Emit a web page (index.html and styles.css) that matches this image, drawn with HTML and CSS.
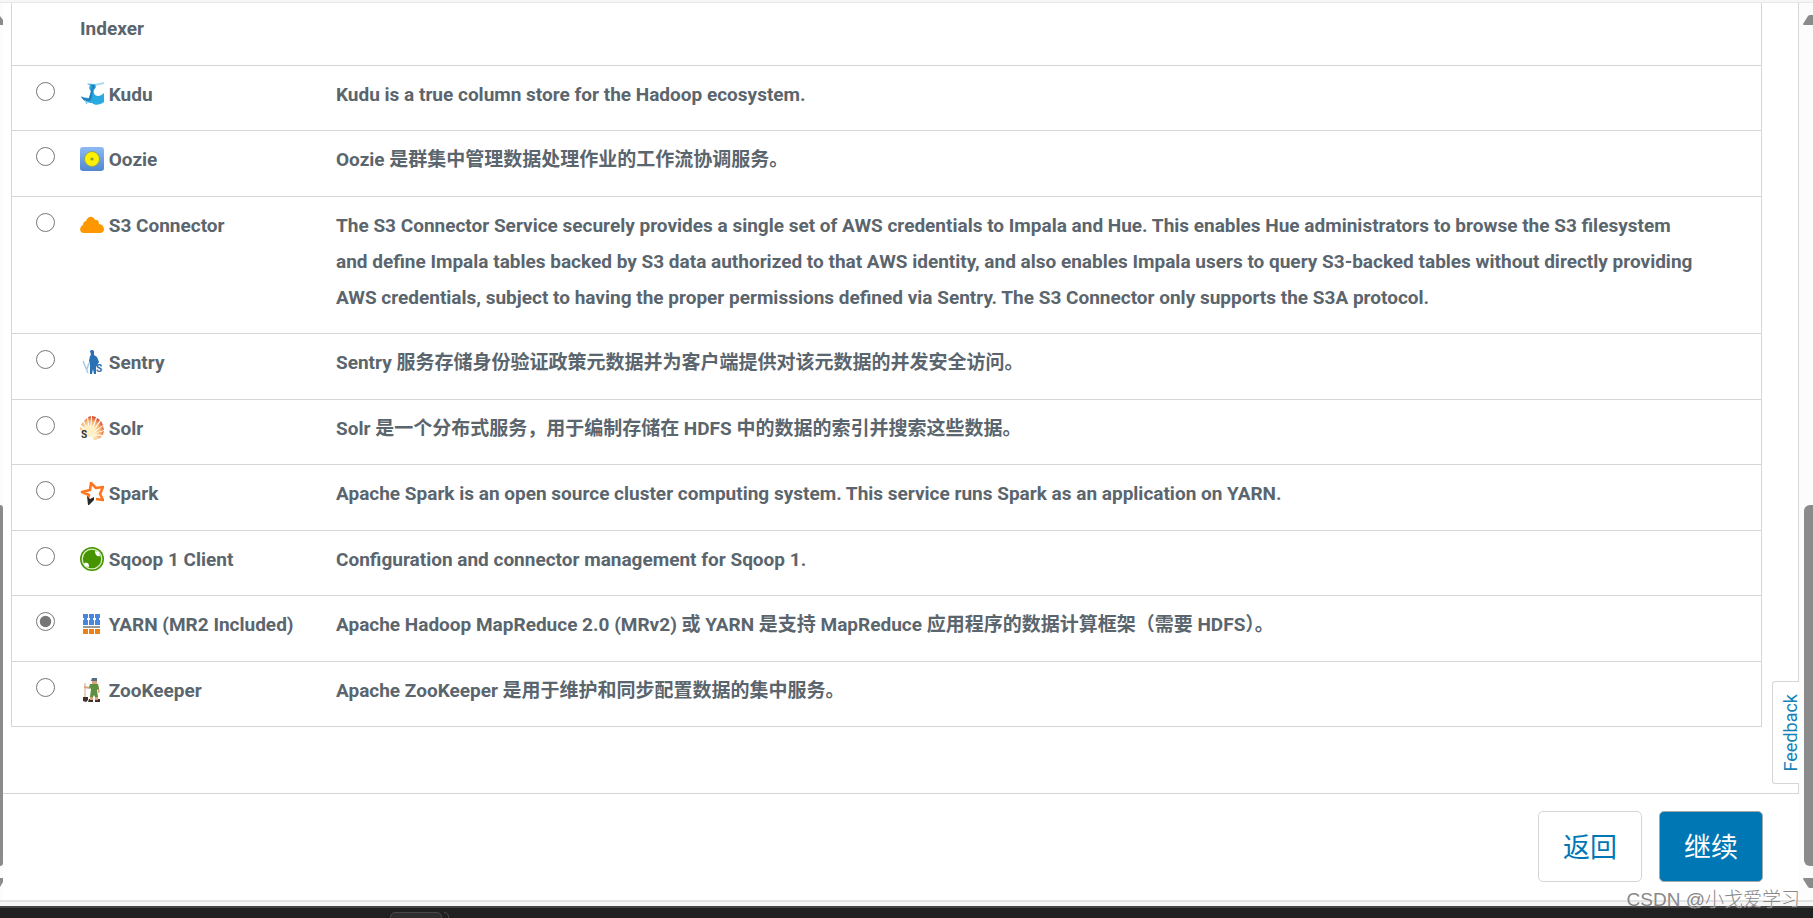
FILE: index.html
```html
<!DOCTYPE html>
<html lang="zh-CN">
<head>
    <meta charset="UTF-8">
    <meta name="viewport" content="width=device-width, initial-scale=1.0">
    <title>添加服务</title>
    <link rel="stylesheet" href="styles.css">
</head>
<body>
    <div class="top-edge"></div>

    <div class="window">
        <div class="scrollbar scrollbar-left">
            <svg class="arrow" viewBox="0 0 3 10"><path d="M0 1L3 5V10H0z"/></svg>
            <div class="thumb"></div>
            <svg class="arrow" viewBox="0 0 3 10"><path d="M0 0H3V4L0 9z"/></svg>
        </div>

        <main class="panel">
            <div class="service-list">
                <table>
                    <tbody>
                        <tr>
                            <td class="pick"></td>
                            <td class="name"><label><svg class="icon" viewBox="0 0 24 24"><path fill="#8d8a80" d="M3 20h7v3H3zM13 20h8v3h-8z"/></svg> Key-Value Store Indexer</label></td>
                            <td class="desc"></td>
                        </tr>
                        <tr>
                            <td class="pick"><input type="radio" name="service" id="kudu"></td>
                            <td class="name"><label for="kudu"><svg class="icon" viewBox="0 0 24 24"><path fill="#a9dcf3" d="M7 1l8 1 9-2v2l-9 2-7-1z"/><path fill="#29abe2" d="M10 3l5-1 1 3-2 3c-1 3 1 6 4 6 2 0 4-1 6-3v9c-4 3-9 4-12 1-4 0-8-2-11-6l8 1 2-6-2-4z"/><path fill="#2380bd" d="M8 2l4 2-1 5-2 7c-1 2-5 0-8-2 2 5 6 6 9 5 3-3 2-7 3-11l2-3-1-2z"/><path stroke="#75bde2" d="M5 18l2 4M8 19l-2 3"/></svg> Kudu</label></td>
                            <td class="desc">Kudu is a true column store for the Hadoop ecosystem.</td>
                        </tr>
                        <tr>
                            <td class="pick"><input type="radio" name="service" id="oozie"></td>
                            <td class="name"><label for="oozie"><svg class="icon" viewBox="0 0 24 24"><defs><linearGradient id="blue" x2="0" y2="1"><stop stop-color="#8dbaf5"/><stop offset="1" stop-color="#4f87cf"/></linearGradient></defs><rect width="24" height="24" rx="3" fill="url(#blue)"/><circle cx="12" cy="12" r="7.5" fill="#fff200" stroke="#91a366"/><circle cx="12" cy="12" r="1.6" fill="#8c9b25"/></svg> Oozie</label></td>
                            <td class="desc">Oozie 是群集中管理数据处理作业的工作流协调服务。</td>
                        </tr>
                        <tr>
                            <td class="pick"><input type="radio" name="service" id="s3"></td>
                            <td class="name"><label for="s3"><svg class="icon" viewBox="0 0 24 24"><path fill="#ff9800" d="M4 20c-5 0-5-6-1-8 0-3 2-4 3-4 2-6 8-5 9-1 3-1 4 2 4 4 3 0 5 3 5 5s-1 4-4 4z"/></svg> S3 Connector</label></td>
                            <td class="desc">The S3 Connector Service securely provides a single set of AWS credentials to Impala and Hue. This enables Hue administrators to browse the S3 filesystem<br>
                                and define Impala tables backed by S3 data authorized to that AWS identity, and also enables Impala users to query S3-backed tables without directly providing<br>
                                AWS credentials, subject to having the proper permissions defined via Sentry. The S3 Connector only supports the S3A protocol.</td>
                        </tr>
                        <tr>
                            <td class="pick"><input type="radio" name="service" id="sentry"></td>
                            <td class="name"><label for="sentry"><svg class="icon" viewBox="0 0 24 24"><path stroke="#a9c9e5" stroke-width="1.5" d="M3 11l5 12M9 13l-2 6"/><path fill="#2a70b5" d="M10 1q2-2 4 0v4l3 2 2 5-3 5v7h-2l-1-5-1 5h-2V14l-1-3 1-5 1-1z"/><text x="16" y="22" class="badge badge-blue">S</text></svg> Sentry</label></td>
                            <td class="desc">Sentry 服务存储身份验证政策元数据并为客户端提供对该元数据的并发安全访问。</td>
                        </tr>
                        <tr>
                            <td class="pick"><input type="radio" name="service" id="solr"></td>
                            <td class="name"><label for="solr"><svg class="icon" viewBox="0 0 24 24"><defs><radialGradient id="shell" gradientUnits="userSpaceOnUse" cx="9" cy="17" r="18"><stop offset=".3" stop-color="#fff0c0"/><stop offset=".65" stop-color="#f6b26f"/><stop offset="1" stop-color="#cf3522"/></radialGradient></defs><path fill="url(#shell)" d="M9 17L0 14v-3zM9 16L1 9l2-3zM9 16L4 5l3-3zM10 16L8 1l3-1zM11 16l1-16 4 1zM12 16l5-14 3 2zM12 17l9-12 2 4zM12 18l11-8 1 4zM12 18l12-3-1 4zM12 19l10 1-3 3zM11 19l7 4-4 1z"/><circle cx="9" cy="15" r="6" fill="#fff0c6"/><text x="1" y="22" class="badge">S</text></svg> Solr</label></td>
                            <td class="desc">Solr 是一个分布式服务，用于编制存储在 HDFS 中的数据的索引并搜索这些数据。</td>
                        </tr>
                        <tr>
                            <td class="pick"><input type="radio" name="service" id="spark"></td>
                            <td class="name"><label for="spark"><svg class="icon" viewBox="0 0 24 24"><path fill="none" stroke="#ff741c" stroke-width="2.6" stroke-linejoin="round" d="M8 17l1-3-7-3 8-2 1-7 5 5 7-1-3 7 3 6-7-1"/><path fill="#292929" d="M7 15l3 3 4-2v3l-5 5H8z"/></svg> Spark</label></td>
                            <td class="desc">Apache Spark is an open source cluster computing system. This service runs Spark as an application on YARN.</td>
                        </tr>
                        <tr>
                            <td class="pick"><input type="radio" name="service" id="sqoop"></td>
                            <td class="name"><label for="sqoop"><svg class="icon" viewBox="0 0 24 24"><circle cx="12" cy="12" r="12" fill="#459400"/><circle cx="12" cy="12" r="9.8" fill="none" stroke="#d9edc4" stroke-width="1.3"/><path fill="#fff" d="M15 4l4 1 1 4c-3 1-5-1-5-5zM4 16c4-1 5 0 5 4l-4-1z"/></svg> Sqoop 1 Client</label></td>
                            <td class="desc">Configuration and connector management for Sqoop 1.</td>
                        </tr>
                        <tr>
                            <td class="pick"><input type="radio" name="service" id="yarn" checked></td>
                            <td class="name"><label for="yarn"><svg class="icon" viewBox="0 0 24 24"><path fill="#4a86e0" d="M3 2h5v4H3zM9 2h5v4H9zM15 2h5v4h-5zM3 8h5v5H3zM9 8h5v5H9zM15 8h5v5h-5zM4 6h3v2H4zM10 6h3v2h-3zM16 6h3v2h-3z"/><path fill="#999" d="M3 14h17v2H3z"/><path fill="#ee7f12" d="M3 17h5v5H3zM9 17h5v5H9zM15 17h5v5h-5z"/></svg> YARN (MR2 Included)</label></td>
                            <td class="desc">Apache Hadoop MapReduce 2.0 (MRv2) 或 YARN 是支持 MapReduce 应用程序的数据计算框架（需要 HDFS）。</td>
                        </tr>
                        <tr>
                            <td class="pick"><input type="radio" name="service" id="zookeeper"></td>
                            <td class="name"><label for="zookeeper"><svg class="icon" viewBox="0 0 24 24"><path stroke="#d1a27b" d="M5 5v15"/><path fill="#43312c" d="M3 19h5v3l-2 2-3-1zM9 21h4v3H8zM15 21h5v3h-5z"/><path fill="#d9a37c" d="M12 2h5v4h-5zM4 8l6 1v2l-6-1zM18 7l2 7-2 1zM10 18h3v4h-3zM15 18h3v4h-3z"/><path fill="#566d80" d="M12 0h5v3h-6z"/><path fill="#5d9041" d="M10 6l8 0 1 5-2 1 1 7h-3l-1-2-1 2h-3l1-8-2-2z"/></svg> ZooKeeper</label></td>
                            <td class="desc">Apache ZooKeeper 是用于维护和同步配置数据的集中服务。</td>
                        </tr>
                    </tbody>
                </table>
            </div>

            <div class="actions">
                <button type="button" class="btn">返回</button>
                <button type="button" class="btn btn-primary">继续</button>
            </div>
            <button type="button" class="feedback">Feedback</button>
        </main>

        <div class="scrollbar scrollbar-right">
            <svg class="arrow" viewBox="0 0 10 10"><path d="M0 9L5 1Q6 0 7 0H10V10H1Q0 10 0 9z"/></svg>
            <div class="thumb"></div>
            <svg class="arrow" viewBox="0 0 10 10"><path d="M0 1L5 9Q6 10 7 10H10V0H1Q0 0 0 1z"/></svg>
        </div>
    </div>

    <div class="window-edge"></div>
    <div class="taskbar"><span class="task"></span><span class="task-stack"></span></div>
    <div class="watermark">CSDN @小戈爱学习</div>
</body>
</html>
```

FILE: styles.css
```css
:root {
    --line: #d4d6d8;
    --text: #5a656d;
    --blue: #0077b5;
    --thumb: #8b8b8b;
}

* {
    box-sizing: border-box;
}

body {
    font-family: Roboto, "Noto Sans CJK SC", sans-serif;
    color: var(--text);
    background: #fff;
    margin: 0;
    height: 100vh;
    display: flex;
    flex-direction: column;
    position: relative;
    overflow: hidden;
}

.top-edge {
    flex: none;
    height: 3px;
    background: #f6f6f6;
    border-bottom: 1px solid #e8e8e8;
}

.window {
    flex: 1;
    min-height: 0;
    display: flex;
}

/* scrollbars */
.scrollbar {
    flex: none;
    background: #fcfcfc;
    display: flex;
    flex-direction: column;
    align-items: flex-end;
    padding: 12px 0;
}

.scrollbar-left {
    width: 3px;
}

.scrollbar-right {
    width: 14px;
}

.arrow {
    flex: none;
    width: 10px;
    height: 10px;
    fill: var(--thumb);
}

.scrollbar-left .arrow {
    width: 3px;
}

.thumb {
    width: 9px;
    height: 361px;
    margin-top: auto;
    margin-bottom: 12px;
    background: var(--thumb);
    border-radius: 6px 0 0 6px;
}

.scrollbar-left .thumb {
    width: 3px;
    border-radius: 0 3px 3px 0;
}

/* service list */
.panel {
    flex: 1;
    min-width: 0;
    display: flex;
    flex-direction: column;
    position: relative;
}

.service-list {
    flex: 1;
    min-height: 0;
    display: flex;
    flex-direction: column;
    justify-content: flex-end;
    overflow: hidden;
    padding: 0 36px 66px 8px;
    border-right: 1px solid var(--line);
    border-bottom: 1px solid var(--line);
}

table {
    width: 100%;
    table-layout: fixed;
    border-spacing: 0;
    border: 1px solid var(--line);
    border-bottom: 0;
}

td {
    font-size: 19px;
    font-weight: 700;
    line-height: 36px;
    vertical-align: top;
    padding: 11px 24px 18px 0;
    border-bottom: 1px solid var(--line);
}

tr:nth-child(even) td {
    padding-bottom: 17px;
}

.pick {
    width: 68px;
    padding-left: 24px;
}

.name {
    width: 256px;
}

input[type="radio"] {
    display: block;
    width: 19px;
    height: 19px;
    margin: 5px 0 0;
    accent-color: #767676;
}

.icon {
    width: 24px;
    height: 24px;
    vertical-align: -5px;
}

.badge {
    font-size: 10px;
    line-height: 10px;
    fill: #333;
}

.badge-blue {
    fill: #2a70b5;
}

/* footer buttons */
.actions {
    flex: none;
    display: flex;
    justify-content: flex-end;
    gap: 17px;
    padding: 17px 36px 18px 0;
}

.btn {
    width: 104px;
    height: 71px;
    font-family: inherit;
    font-size: 27px;
    color: var(--blue);
    background: #fff;
    border: 1px solid var(--line);
    border-radius: 5px;
    padding: 0 0 2px;
    cursor: pointer;
}

.btn-primary {
    color: #fff;
    background: var(--blue);
    border-color: #a5a9ab;
}

.feedback {
    position: absolute;
    right: 0;
    bottom: 116px;
    width: 27px;
    height: 103px;
    writing-mode: sideways-lr;
    font-family: inherit;
    font-size: 18px;
    line-height: 20px;
    color: #1482b9;
    background: #fff;
    border: 1px solid var(--line);
    border-right: 0;
    border-radius: 3px 0 0 3px;
    padding: 0 0 0 8px;
    cursor: pointer;
}

/* desktop below the window */
.window-edge {
    flex: none;
    height: 6px;
    background: #f6f6f6;
    border-top: 2px solid #e2e2e2;
}

.taskbar {
    flex: none;
    height: 12px;
    display: flex;
    gap: 2px;
    background: #202020;
    border-top: 2px solid #444;
    padding: 4px 0 0 390px;
    overflow: hidden;
}

.task {
    width: 52px;
    height: 20px;
    background: #2e2e2e;
    border: 1px solid #484848;
    border-radius: 5px;
}

.task-stack {
    width: 5px;
    height: 20px;
    border: 1px solid #484848;
    border-left: 0;
    border-radius: 0 5px 0 0;
}

.watermark {
    position: absolute;
    right: 13px;
    bottom: 6px;
    font-family: "Liberation Sans", "Noto Sans CJK SC", sans-serif;
    font-size: 19px;
    font-weight: 300;
    line-height: 24px;
    color: #888;
    text-shadow: 0 0 1px #fff;
}
```
